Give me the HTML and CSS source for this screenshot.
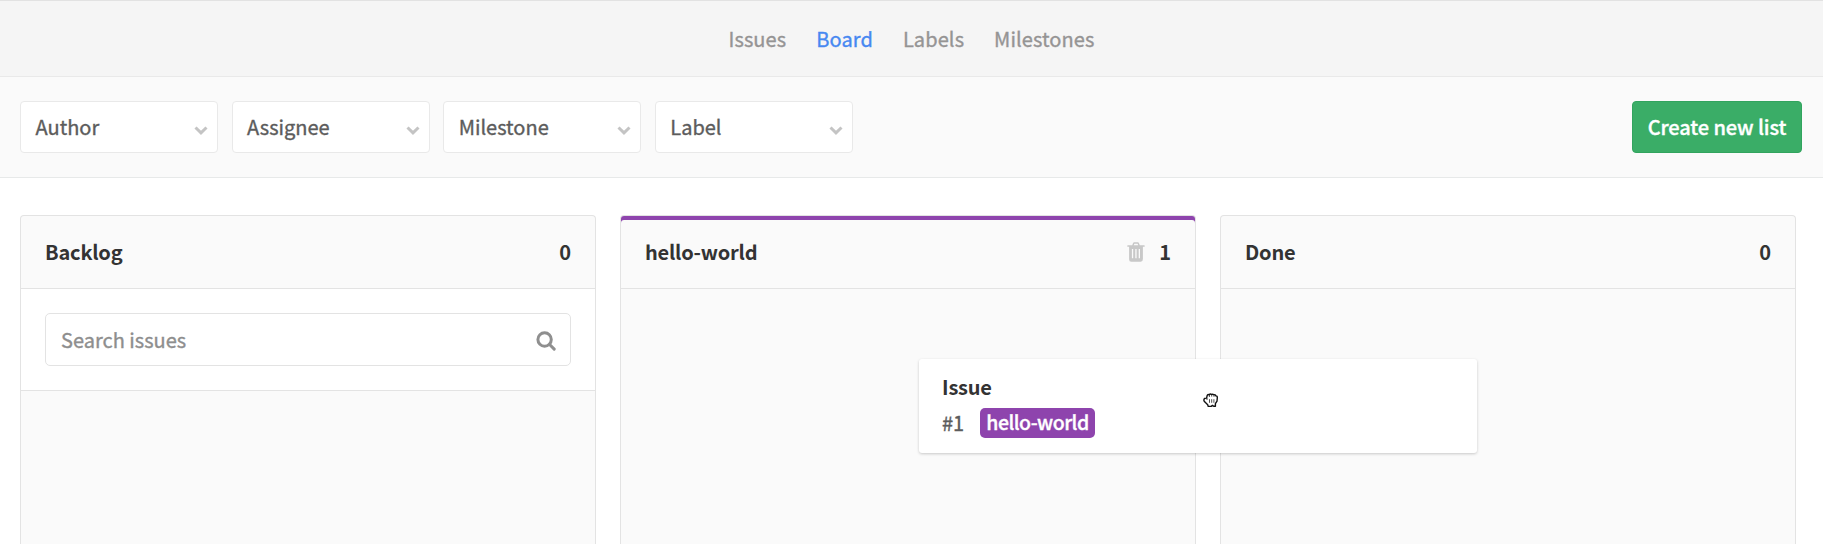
FILE: index.html
```html
<!DOCTYPE html>
<html lang="en">
<head>
<meta charset="utf-8">
<title>Board</title>
<link rel="stylesheet" href="styles.css">
</head>
<body>
<nav class="subnav">
  <a class="subnav-link">Issues</a>
  <a class="subnav-link active">Board</a>
  <a class="subnav-link">Labels</a>
  <a class="subnav-link">Milestones</a>
</nav>
<section class="filters">
  <div class="dropdown"><span>Author</span><svg class="chevron" viewBox="0 0 14 9"><path d="M1.5 1.5 7 6.8 12.5 1.5"/></svg></div>
  <div class="dropdown"><span>Assignee</span><svg class="chevron" viewBox="0 0 14 9"><path d="M1.5 1.5 7 6.8 12.5 1.5"/></svg></div>
  <div class="dropdown"><span>Milestone</span><svg class="chevron" viewBox="0 0 14 9"><path d="M1.5 1.5 7 6.8 12.5 1.5"/></svg></div>
  <div class="dropdown"><span>Label</span><svg class="chevron" viewBox="0 0 14 9"><path d="M1.5 1.5 7 6.8 12.5 1.5"/></svg></div>
  <button class="create">Create new list</button>
</section>
<main class="board">
  <section class="list">
    <header class="list-header"><h3 class="list-title">Backlog</h3><span class="count">0</span></header>
    <div class="search">
      <div class="search-box"><span>Search issues</span>
        <svg class="search-icon" viewBox="0 0 20 20"><circle cx="8.6" cy="8.5" r="6.7"/><path d="m13.6 13.5 4.6 4.6"/></svg>
      </div>
    </div>
  </section>
  <section class="list">
    <header class="list-header labelled"><h3 class="list-title">hello-world</h3>
      <svg class="trash" viewBox="0 0 18 20"><path fill-rule="evenodd" d="M5.2 3.2 6.1 1Q6.4.3 7.1.3h3.8q.7 0 1 .7l.9 2.2h4.4q.5 0 .5.5v.7q0 .4-.5.4h-1.3v12.3q0 2.6-2.1 2.6H4.2q-2.1 0-2.1-2.5V4.8H.8q-.5 0-.5-.4v-.7q0-.5.5-.5zm1.6 0h4.4l-.6-1.4H7.4zM4.9 7v9.2h1.3V7zm3.4 0v9.2h1.3V7zm3.4 0v9.2H13V7z"/></svg>
      <span class="count">1</span></header>
  </section>
  <section class="list">
    <header class="list-header"><h3 class="list-title">Done</h3><span class="count">0</span></header>
  </section>
</main>
<article class="card">
  <h4 class="card-title">Issue</h4>
  <div class="card-meta"><span class="card-id">#1</span><span class="label">hello-world</span></div>
</article>
<svg class="cursor" viewBox="0 0 16 15"><path class="hand" d="M4.2 2.3Q5.1 1.1 6.2 1.8 7.2.5 8.5 1.5 9.8.7 10.8 1.9 12.4 1.4 12.8 2.9 14.4 2.8 14.3 4.7L14 8.2 12.4 10.7V13.2H10.6L9.5 12.4 8.2 13.4H5.2L4.7 11.7 1.2 8.3Q.4 6.4 1.7 5.4L3.6 5.1Z"/><path class="lines" d="M6.5 6.2v3.6M8.7 6.2v3.6M10.9 6.2v3.6M6.4 2v2M8.7 2v1.6M11 2.2v1.6M4 5v2"/></svg>
</body>
</html>
```
FILE: styles.css
```css
* { box-sizing: border-box; }
body {
  margin: 0;
  height: 544px;
  overflow: hidden;
  background: #fff;
  color: #5c5c5c;
  font: 20px/28px "Noto Sans CJK SC", "Noto Sans", sans-serif;
  -webkit-text-stroke: .35px currentColor;
  display: flex;
  flex-direction: column;
}
h3, h4 { margin: 0; font-size: 20px; font-weight: 700; color: #333; letter-spacing: -.2px; -webkit-text-stroke: 0; }
.subnav {
  height: 77px;
  flex: none;
  display: flex;
  justify-content: center;
  align-items: center;
  gap: 30px;
  background: #f5f5f5;
  border-top: 1px solid #e2e2e2;
  border-bottom: 1px solid #e9e9e9;
}
.subnav-link { color: #959494; letter-spacing: .1px; }
.subnav-link.active { color: #4688f1; }
.filters {
  height: 101px;
  flex: none;
  display: flex;
  align-items: center;
  gap: 13.6px;
  padding: 0 21px 0 20px;
  background: #fafafa;
  border-bottom: 1px solid #e7e9e9;
}
.dropdown {
  width: 198px;
  height: 52px;
  display: flex;
  align-items: center;
  justify-content: space-between;
  padding: 0 9px 0 14.5px;
  background: #fff;
  border: 1px solid #e9e9e9;
  border-radius: 4px;
}
.chevron { width: 14px; height: 9px; margin-top: 6px; fill: none; stroke: #c4c4c4; stroke-width: 3; }
.create {
  width: 170px;
  height: 52px;
  margin-left: auto;
  padding: 0;
  font: inherit;
  font-weight: 500;
  letter-spacing: -.1px;
  color: #fff;
  background: #3aad67;
  border: 1px solid #31a45e;
  border-radius: 4px;
}
.board {
  flex: 1;
  display: flex;
  gap: 24px;
  padding: 37px 20px 0;
}
.list {
  width: 576px;
  flex: none;
  background: #fafafa;
  border: 1px solid #e3e3e3;
  border-bottom: 0;
  border-radius: 4px 4px 0 0;
}
.list-header {
  height: 73px;
  display: flex;
  align-items: center;
  padding: 0 24px;
  border-bottom: 1px solid #e3e3e3;
}
.labelled { box-shadow: inset 0 4px #8e44ad; border-radius: 3px 3px 0 0; }
.list-title { flex: 1; }
.count { font-weight: 700; color: #333; -webkit-text-stroke: 0; }
.trash { width: 18px; height: 20px; margin-right: 14px; fill: #c8c8c8; }
.search { padding: 24px; background: #fff; border-bottom: 1px solid #e3e3e3; }
.search-box {
  height: 53px;
  display: flex;
  align-items: center;
  justify-content: space-between;
  padding: 0 14px 0 15px;
  color: #8e8e8e;
  border: 1px solid #e3e3e3;
  border-radius: 5px;
}
.search-icon { width: 20px; height: 20px; margin-top: 2px; fill: none; stroke: #8f8f8f; stroke-width: 3; stroke-linecap: round; }
.card {
  position: absolute;
  left: 919px;
  top: 359px;
  width: 558px;
  height: 94px;
  padding: 14px 23px;
  background: #fff;
  border-radius: 3px;
  box-shadow: 0 1px 3px rgba(0, 0, 0, .2);
}
.card-meta { display: flex; align-items: center; margin-top: 7px; }
.card-id { width: 38px; letter-spacing: -.2px; }
.label {
  width: 115px;
  height: 30px;
  text-align: center;
  font-size: 19.5px;
  font-weight: 500;
  letter-spacing: -.5px;
  color: #fff;
  background: #8e44ad;
  border-radius: 5px;
}
.cursor { position: absolute; left: 1203px; top: 393px; width: 16px; height: 15px; }
.hand { fill: #fff; stroke: #111; stroke-width: 1.4; stroke-linejoin: round; }
.lines { fill: none; stroke: #222; stroke-width: .8; }
```
